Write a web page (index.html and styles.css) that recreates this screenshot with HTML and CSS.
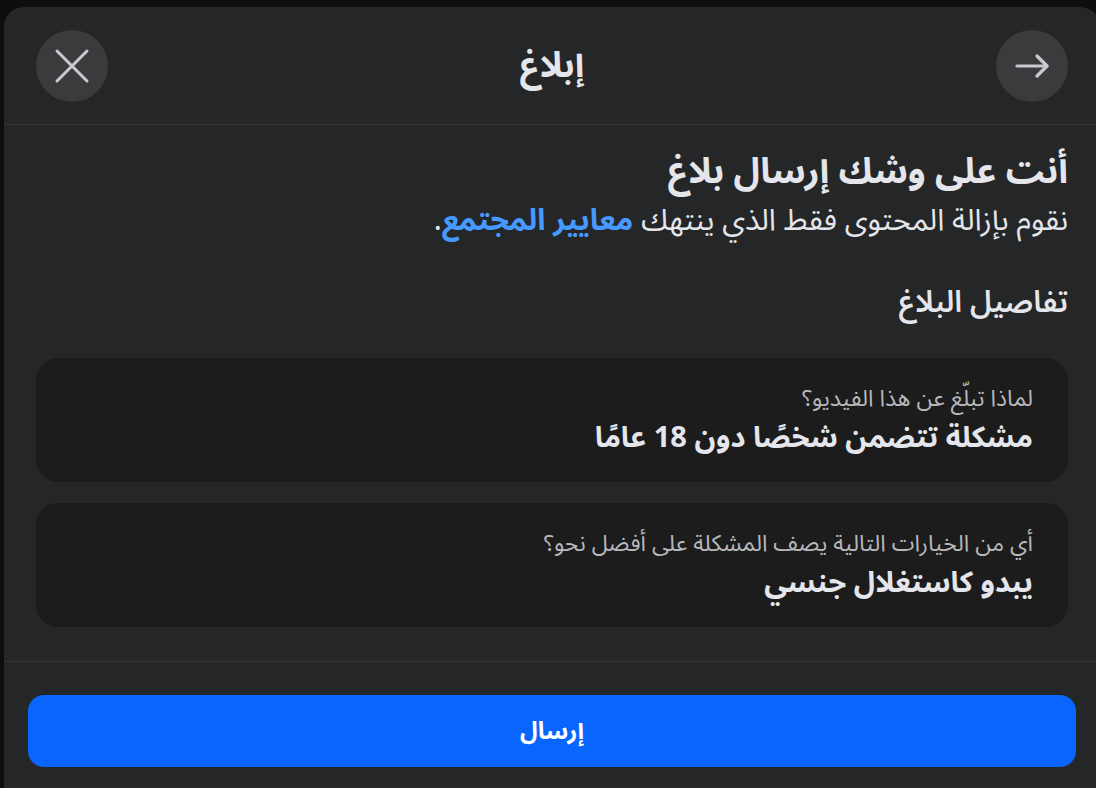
FILE: index.html
```html
<!DOCTYPE html>
<html lang="ar">
<head>
    <meta charset="UTF-8">
    <title>إبلاغ</title>
    <link rel="stylesheet" href="styles.css">
</head>
<body>
    <div class="modal" dir="rtl">
        <div class="modal-header">
            <button class="round-btn" type="button" aria-label="رجوع">
                <svg width="40" height="40" viewBox="0 0 40 40" fill="none" stroke="#c8cacd" stroke-width="3.2" stroke-linecap="round" stroke-linejoin="round">
                    <path d="M5 20h30"/>
                    <path d="M25 10l10 10-10 10"/>
                </svg>
            </button>
            <h2 class="modal-title">إبلاغ</h2>
            <button class="round-btn" type="button" aria-label="إغلاق">
                <svg width="36" height="36" viewBox="0 0 36 36" fill="none" stroke="#c8cacd" stroke-width="3" stroke-linecap="round">
                    <path d="M3 3l30 30"/>
                    <path d="M33 3L3 33"/>
                </svg>
            </button>
        </div>

        <div class="modal-body">
            <h1 class="lead">أنت على وشك إرسال بلاغ</h1>
            <p class="sub">نقوم بإزالة المحتوى فقط الذي ينتهك <a href="#">معايير المجتمع</a>.</p>

            <h3 class="section-title">تفاصيل البلاغ</h3>

            <div class="detail-card">
                <div class="detail-label">لماذا تبلّغ عن هذا الفيديو؟</div>
                <div class="detail-value">مشكلة تتضمن شخصًا دون 18 عامًا</div>
            </div>

            <div class="detail-card">
                <div class="detail-label">أي من الخيارات التالية يصف المشكلة على أفضل نحو؟</div>
                <div class="detail-value">يبدو كاستغلال جنسي</div>
            </div>
        </div>

        <div class="modal-footer">
            <button class="submit-btn" type="submit">إرسال</button>
        </div>
    </div>
</body>
</html>
```

FILE: styles.css
```css
html,
body {
    margin: 0;
    height: 100%;
    overflow: hidden;
}

body {
    background-color: #0e0e0f;
    font-family: "Noto Sans Arabic", "DejaVu Sans", "Noto Sans", sans-serif;
    color: #e4e6eb;
}

.modal {
    width: 1096px;
    min-height: 800px;
    margin: 7px 0 0 4px;
    background-color: #252628;
    border-radius: 20px;
    box-sizing: border-box;
}

.modal-header {
    display: flex;
    align-items: center;
    justify-content: space-between;
    height: 117px;
    padding: 0 32px;
    border-bottom: 1px solid #343537;
}

.round-btn {
    width: 72px;
    height: 72px;
    border-radius: 50%;
    border: none;
    background-color: #3a3b3d;
    display: flex;
    align-items: center;
    justify-content: center;
    padding: 0;
    cursor: pointer;
}

.modal-title {
    margin: 0;
    font-size: 35px;
    font-weight: bold;
    color: #e4e6eb;
}

.modal-body {
    padding: 22px 32px 34px;
}

.lead {
    margin: 0;
    font-size: 36px;
    line-height: 50px;
    font-weight: bold;
    color: #e4e6eb;
}

.sub {
    margin: 2px 0 0;
    font-size: 30px;
    line-height: 44px;
    color: #e4e6eb;
}

.sub a {
    color: #4599ff;
    font-weight: bold;
    text-decoration: none;
}

.section-title {
    margin: 38px 0 33px;
    font-size: 30px;
    line-height: 44px;
    font-weight: 600;
    color: #e4e6eb;
}

.detail-card {
    background-color: #1c1c1d;
    border-radius: 22px;
    padding: 24px 35px 22px;
    margin-bottom: 21px;
}

.detail-card:last-child {
    margin-bottom: 0;
}

.detail-label {
    font-size: 23px;
    line-height: 34px;
    color: #b6b8bc;
}

.detail-value {
    font-size: 29px;
    line-height: 44px;
    font-weight: bold;
    color: #e4e6eb;
}

.modal-footer {
    border-top: 1px solid #343537;
    padding: 33px 24px 0;
}

.submit-btn {
    width: 100%;
    height: 72px;
    border: none;
    border-radius: 16px;
    background-color: #0866ff;
    color: #fff;
    font-family: inherit;
    font-size: 24px;
    font-weight: bold;
    cursor: pointer;
}
```
